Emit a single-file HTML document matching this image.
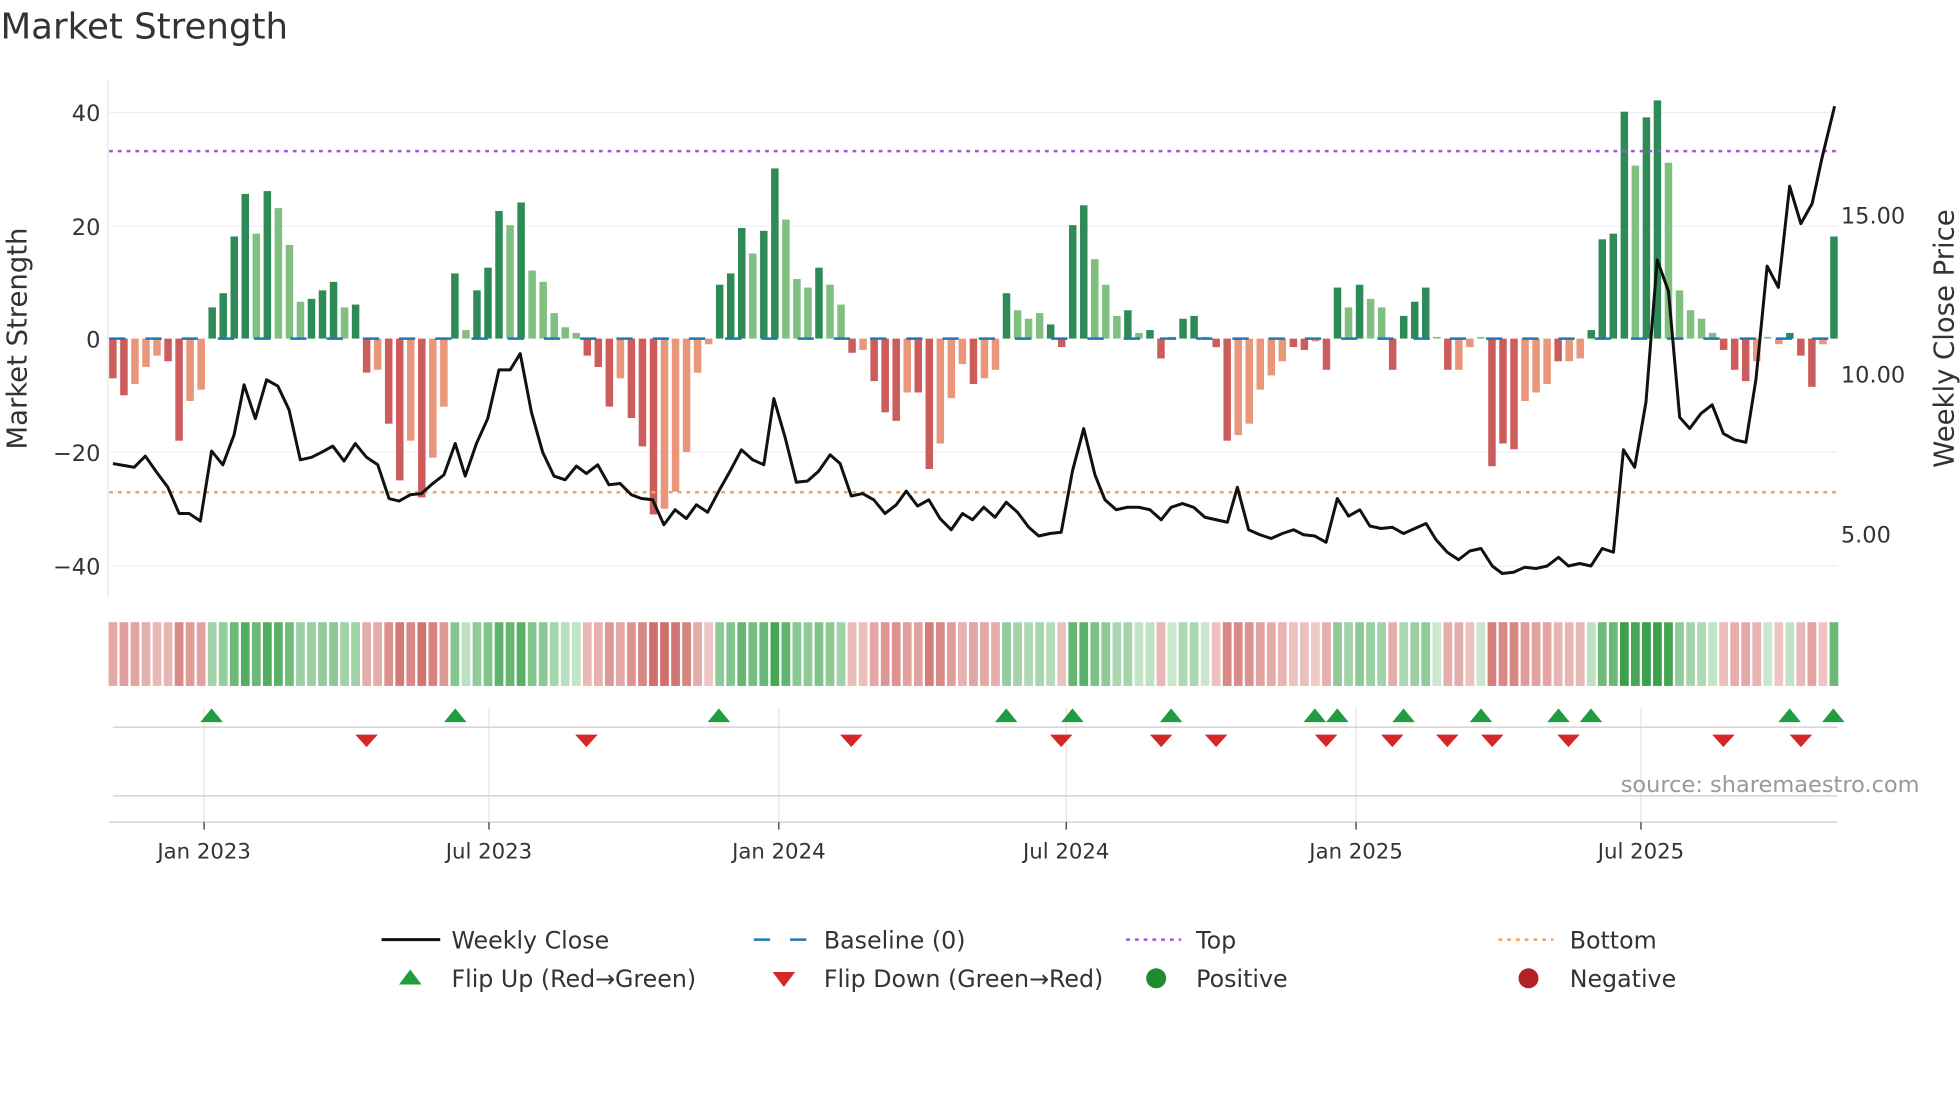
<!DOCTYPE html>
<html><head><meta charset="utf-8"><style>
html,body{margin:0;padding:0;background:#fff;}
svg{display:block;font-family:"DejaVu Sans","Liberation Sans",sans-serif;}
</style></head><body>
<svg id="c" width="1960" height="1102" viewBox="0 0 1568 882" xmlns="http://www.w3.org/2000/svg">
<text x="0" y="31" font-size="28.5" fill="#333">Market Strength</text>
<g stroke="#eef0f4" stroke-width="1">
<line x1="87" y1="90" x2="1470" y2="90"/><line x1="87" y1="181" x2="1470" y2="181"/>
<line x1="87" y1="362" x2="1470" y2="362"/><line x1="87" y1="453" x2="1470" y2="453"/>
</g>
<line x1="86" y1="65" x2="86" y2="478" stroke="#e6e6e6"/>
<g font-size="18" fill="#333" text-anchor="end">
<text x="80" y="97">40</text><text x="80" y="188">20</text><text x="80" y="278">0</text>
<text x="80" y="369">−20</text><text x="80" y="460">−40</text>
</g>
<g font-size="18" fill="#333">
<text x="1473" y="179">15.00</text><text x="1473" y="306">10.00</text><text x="1473" y="434">5.00</text>
</g>
<text transform="translate(21,271) rotate(-90)" font-size="22" fill="#333" text-anchor="middle">Market Strength</text>
<text transform="translate(1563,271) rotate(-90)" font-size="22" fill="#333" text-anchor="middle">Weekly Close Price</text>
<g id="bars"></g>
<line x1="87" y1="271" x2="1470" y2="271" stroke="#1f77b4" stroke-width="2" stroke-dasharray="13,16"/>
<line x1="87" y1="121" x2="1470" y2="121" stroke="#9b59d6" stroke-width="2" stroke-dasharray="3,4"/>
<line x1="87" y1="394" x2="1470" y2="394" stroke="#f2a35e" stroke-width="2" stroke-dasharray="3,4"/>
<polyline id="pl" fill="none" stroke="#111" stroke-width="2.4" stroke-linejoin="round"/>
<g id="heat"></g>
<g stroke="#e6e6e6">
<line x1="163" y1="566" x2="163" y2="658"/><line x1="391" y1="566" x2="391" y2="658"/>
<line x1="623" y1="566" x2="623" y2="658"/><line x1="853" y1="566" x2="853" y2="658"/>
<line x1="1085" y1="566" x2="1085" y2="658"/><line x1="1313" y1="566" x2="1313" y2="658"/>
</g>
<line x1="90" y1="582" x2="1470" y2="582" stroke="#ccc"/>
<line x1="90" y1="637" x2="1470" y2="637" stroke="#ccc"/>
<line x1="87" y1="658" x2="1470" y2="658" stroke="#ccc"/>
<g id="tri"></g>
<text x="1536" y="634" font-size="18" fill="#999" text-anchor="end">source: sharemaestro.com</text>
<g stroke="#333"><line x1="163" y1="658" x2="163" y2="664"/><line x1="391" y1="658" x2="391" y2="664"/><line x1="623" y1="658" x2="623" y2="664"/><line x1="853" y1="658" x2="853" y2="664"/><line x1="1085" y1="658" x2="1085" y2="664"/><line x1="1313" y1="658" x2="1313" y2="664"/></g>
<g font-size="17" fill="#333" text-anchor="middle">
<text x="163" y="687">Jan 2023</text><text x="391" y="687">Jul 2023</text><text x="623" y="687">Jan 2024</text>
<text x="853" y="687">Jul 2024</text><text x="1085" y="687">Jan 2025</text><text x="1313" y="687">Jul 2025</text>
</g>
<g font-size="19" fill="#333">
<line x1="305" y1="752" x2="352" y2="752" stroke="#111" stroke-width="2.4"/>
<text x="361" y="759">Weekly Close</text>
<line x1="603" y1="752" x2="647" y2="752" stroke="#1f77b4" stroke-width="2" stroke-dasharray="13,16"/>
<text x="659" y="759">Baseline (0)</text>
<line x1="901" y1="752" x2="945" y2="752" stroke="#9b59d6" stroke-width="2" stroke-dasharray="3,4"/>
<text x="957" y="759">Top</text>
<line x1="1199" y1="752" x2="1243" y2="752" stroke="#f2a35e" stroke-width="2" stroke-dasharray="3,4"/>
<text x="1256" y="759">Bottom</text>
<polygon points="319,788 337,788 328,776" fill="#1f9d3f"/>
<text x="361" y="790">Flip Up (Red→Green)</text>
<polygon points="618,778 636,778 627,790" fill="#d62728"/>
<text x="659" y="790">Flip Down (Green→Red)</text>
<circle cx="925" cy="783" r="8" fill="#1f8a2e"/>
<text x="957" y="790">Positive</text>
<circle cx="1223" cy="783" r="8" fill="#b22222"/>
<text x="1256" y="790">Negative</text>
</g>
</svg>
<script>
var v=[[-7,1],[-10,1],[-8,0],[-5,0],[-3,0],[-4,1],[-18,1],[-11,0],[-9,0],[5.5,1],[8,1],[18,1],[25.5,1],[18.5,0],[26,1],[23,0],[16.5,0],[6.5,0],[7,1],[8.5,1],[10,1],[5.5,0],[6,1],[-6,1],[-5.5,0],[-15,1],[-25,1],[-18,0],[-28,1],[-21,0],[-12,0],[11.5,1],[1.5,0],[8.5,1],[12.5,1],[22.5,1],[20,0],[24,1],[12,0],[10,0],[4.5,0],[2,0],[1,0],[-3,1],[-5,1],[-12,1],[-7,0],[-14,1],[-19,1],[-31,1],[-30,0],[-27,0],[-20,0],[-6,0],[-1,0],[9.5,1],[11.5,1],[19.5,1],[15,0],[19,1],[30,1],[21,0],[10.5,0],[9,0],[12.5,1],[9.5,0],[6,0],[-2.5,1],[-2,0],[-7.5,1],[-13,1],[-14.5,1],[-9.5,0],[-9.5,1],[-23,1],[-18.5,0],[-10.5,0],[-4.5,0],[-8,1],[-7,0],[-5.5,0],[8,1],[5,0],[3.5,0],[4.5,0],[2.5,1],[-1.5,1],[20,1],[23.5,1],[14,0],[9.5,0],[4,0],[5,1],[1,0],[1.5,1],[-3.5,1],[0.3,0],[3.5,1],[4,1],[0.3,0],[-1.5,1],[-18,1],[-17,0],[-15,0],[-9,0],[-6.5,0],[-4,0],[-1.5,1],[-2,1],[-0.5,0],[-5.5,1],[9,1],[5.5,0],[9.5,1],[7,0],[5.5,0],[-5.5,1],[4,1],[6.5,1],[9,1],[0.3,0],[-5.5,1],[-5.5,0],[-1.5,0],[0.3,0],[-22.5,1],[-18.5,1],[-19.5,1],[-11,0],[-9.5,0],[-8,0],[-4,1],[-4,0],[-3.5,0],[1.5,1],[17.5,1],[18.5,1],[40,1],[30.5,0],[39,1],[42,1],[31,0],[8.5,0],[5,0],[3.5,0],[1,0],[-2,1],[-5.5,1],[-7.5,1],[-4,0],[0.3,0],[-1,0],[1,1],[-3,1],[-8.5,1],[-1,0],[18,1]];
var NS="http://www.w3.org/2000/svg",b=document.getElementById('bars'),h=document.getElementById('heat');
function el(t,a,p){var e=document.createElementNS(NS,t);for(var k in a)e.setAttribute(k,a[k]);p.appendChild(e);return e;}
function mix(a,c,t){return 'rgb('+[0,1,2].map(function(i){return Math.round(a[i]+(c[i]-a[i])*t)}).join(',')+')';}
v.forEach(function(d,i){var x=90+i*8.83,val=d[0],y0=271,hgt=Math.abs(val)*4.54;
var col=val>=0?(d[1]?'#2e8b57':'#7fbf7f'):(d[1]?'#cd5c5c':'#e9967a');
el('rect',{x:x-3,y:val>=0?y0-hgt:y0,width:6,height:Math.max(hgt,0.5),fill:col},b);
var t=Math.min(Math.abs(val)/35,1);
var hc=val>=0?mix([212,236,214],[58,160,75],Math.pow(t,0.6)):mix([242,210,208],[204,102,98],Math.pow(t,0.6));
el('rect',{x:x-3.5,y:498,width:7,height:51,fill:hc},h);});
var p=[[90,371],[107,374],[116,365],[125,378],[134,390],[143,411],[151,411],[160,417],[169,361],[178,372],[187,348],[195,308],[204,335],[213,304],[222,309],[231,328],[240,368],[249,366],[257,362],[266,357],[275,369],[284,355],[293,366],[302,372],[311,399],[319,401],[328,396],[337,395],[346,387],[355,380],[364,355],[372,381],[381,355],[390,335],[399,296],[408,296],[416,283],[425,330],[434,362],[443,381],[452,384],[461,373],[469,379],[478,372],[487,388],[496,387],[505,396],[513,399],[522,400],[531,420],[540,408],[549,415],[557,404],[566,410],[575,393],[584,377],[593,360],[602,368],[611,372],[619,319],[628,350],[637,386],[646,385],[655,377],[664,364],[672,371],[681,397],[690,395],[699,400],[708,411],[717,404],[725,393],[734,405],[743,400],[752,415],[761,424],[770,411],[778,416],[787,406],[796,414],[805,402],[814,410],[823,422],[831,429],[840,427],[849,426],[858,377],[867,343],[876,380],[884,400],[893,408],[902,406],[911,406],[920,408],[929,416],[937,406],[946,403],[955,406],[964,414],[973,416],[982,418],[990,390],[999,424],[1008,428],[1017,431],[1026,427],[1035,424],[1043,428],[1052,429],[1061,434],[1070,399],[1079,413],[1088,408],[1096,421],[1105,423],[1114,422],[1123,427],[1132,423],[1141,419],[1149,432],[1158,442],[1167,448],[1176,441],[1185,439],[1194,453],[1202,459],[1211,458],[1220,454],[1229,455],[1238,453],[1247,446],[1255,453],[1264,451],[1273,453],[1282,439],[1291,442],[1299,360],[1308,374],[1317,322],[1326,208],[1335,233],[1344,334],[1352,343],[1361,331],[1370,324],[1379,347],[1388,352],[1397,354],[1405,304],[1414,213],[1423,230],[1432,149],[1441,179],[1450,163],[1458,126],[1468,85]];
document.getElementById('pl').setAttribute('points',p.map(function(q){return q.join(',')}).join(' '));
var tr=document.getElementById('tri');
[169,364,575,805,858,937,1052,1070,1123,1185,1247,1273,1432,1467].forEach(function(x){el('polygon',{points:(x-9)+',578 '+(x+9)+',578 '+x+',567',fill:'#1f9d3f'},tr);});
[293,469,681,849,929,973,1061,1114,1158,1194,1255,1379,1441].forEach(function(x){el('polygon',{points:(x-9)+',588 '+(x+9)+',588 '+x+',598',fill:'#d62728'},tr);});
</script>
</body></html>
